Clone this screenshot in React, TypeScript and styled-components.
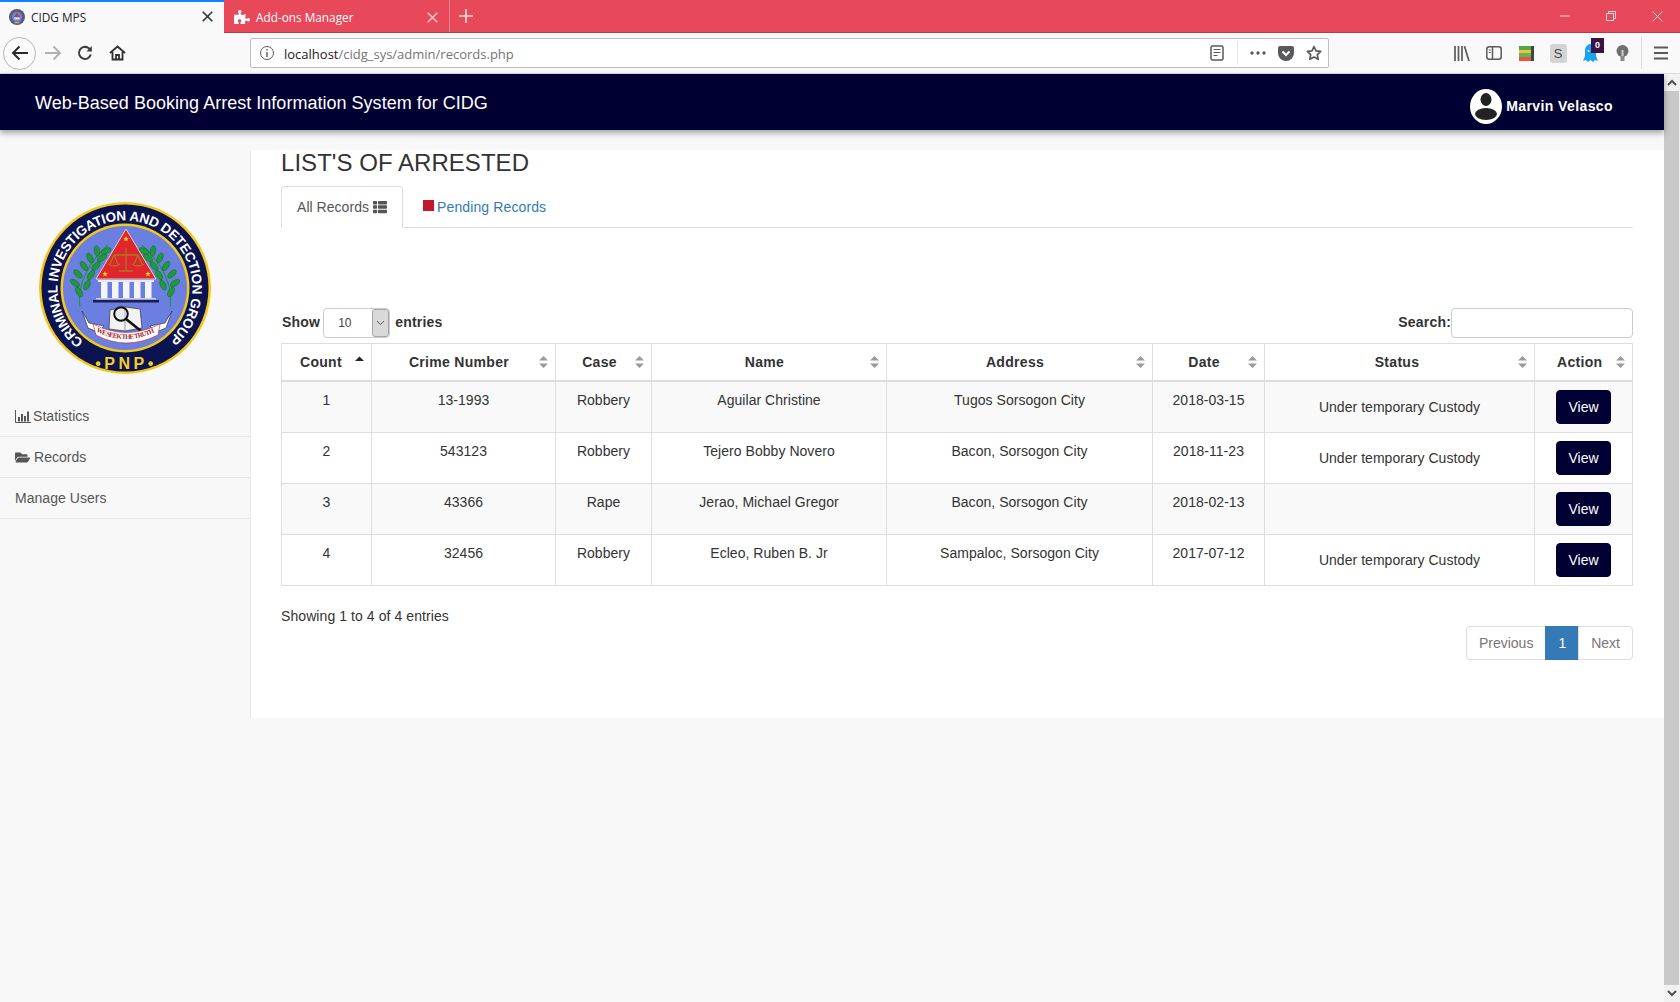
import React from "react";
import styled, { createGlobalStyle } from "styled-components";
import { FaFolderOpen, FaPuzzlePiece, FaThList } from "react-icons/fa";

const Global = createGlobalStyle`
  html, body { margin: 0; padding: 0; background: #f8f8f8; overflow: hidden; }
  * { box-sizing: border-box; }
  body { font-family: "Liberation Sans", Arial, sans-serif; font-size: 14px; line-height: 20px; color: #333; letter-spacing: .04px; }
`;

const Window = styled.div`
  width: 1680px; height: 1002px; display: flex; flex-direction: column; overflow: hidden;
`;

/* ---------- browser tab strip ---------- */
const TabStrip = styled.div`
  height: 33px; flex: none; display: flex; background: #e8495a; border-bottom: 1px solid #a9414e;
  font-family: "Open Sans", "Noto Sans", sans-serif; font-size: 11.8px; line-height: 32px; letter-spacing: 0;
`;
const Tab = styled.div<{ $active?: boolean }>`
  height: ${(p) => (p.$active ? "33px" : "32px")};
  width: ${(p) => (p.$active ? "224px" : "226px")};
  display: flex; align-items: center;
  padding: ${(p) => (p.$active ? "0 10px 2px 9px" : "2px 10px 0 10px")};
  background: ${(p) => (p.$active ? "#f9f9fa" : "transparent")};
  color: ${(p) => (p.$active ? "#222" : "#fff")};
  border-top: ${(p) => (p.$active ? "2px solid #0a84ff" : "none")};
  border-right: ${(p) => (p.$active ? "none" : "1px solid #f08692")};
`;
const TabLabel = styled.span<{ $gap: number }>`
  margin-left: ${(p) => p.$gap}px;
`;
const TabClose = styled.span`
  margin-left: auto; width: 14px; height: 14px; display: flex; align-items: center; justify-content: center;
`;
const NewTab = styled.div`
  width: 32px; display: flex; align-items: center; justify-content: center;
`;
const WindowControls = styled.div`
  margin-left: auto; display: flex;
`;
const WindowButton = styled.div`
  width: 46px; height: 32px; display: flex; align-items: center; justify-content: center;
`;

/* ---------- browser toolbar ---------- */
const Toolbar = styled.div`
  height: 41px; flex: none; display: flex; align-items: center; padding-left: 3px;
  background: #f9f9fa; border-bottom: 1px solid #dcdcde;
`;
const ToolButton = styled.div`
  position: relative; width: 32px; height: 32px; flex: none; display: flex; align-items: center; justify-content: center;
`;
const BackButton = styled(ToolButton)`
  width: 33px; height: 33px; margin-right: 1px; border-radius: 50%; border: 1px solid #b5b5b7; background: #fbfbfc;
`;
const AddressBar = styled.div`
  width: 1079px; height: 30px; margin-left: 117px; padding-left: 8px; display: flex; align-items: center;
  background: #fff; border: 1px solid #bebebe; border-radius: 2px; flex: none;
  font-family: "Open Sans", "Noto Sans", sans-serif; font-size: 13px; letter-spacing: 0;
`;
const UrlHost = styled.span`
  margin-left: 9px; padding-top: 2px; color: #1a1a1a;
`;
const UrlPath = styled.span`
  color: #747476;
`;
const AddressActions = styled.div`
  margin-left: auto; display: flex; align-items: center;
`;
const AddressIcon = styled.div`
  width: 28px; height: 28px; display: flex; align-items: center; justify-content: center;
`;
const AddressDivider = styled.div`
  width: 1px; height: 24px; margin: 0 6px; background: #e4e4e6;
`;
const ToolbarRight = styled.div`
  margin-left: 117px; display: flex; align-items: center;
`;
const ToolbarDivider = styled.div`
  width: 1px; height: 32px; margin: 0 3px; background: #dadadc;
`;
const GhostBadge = styled.span`
  position: absolute; top: 1px; left: 17px; width: 13px; height: 15px; background: #3a1245; color: #fff;
  font: bold 9px/14px "Liberation Sans", sans-serif; text-align: center;
`;
const SquareS = styled.span`
  width: 17px; height: 19px; border-radius: 3px; background: #d4d4d4; color: #444; text-align: center;
  font: 13px/19px "Liberation Sans", sans-serif;
`;

/* ---------- viewport ---------- */
const Viewport = styled.div`
  flex: 1; min-height: 0; display: flex;
`;
const Page = styled.div`
  width: 1664px; flex: none; display: flex; flex-direction: column; background: #f8f8f8;
`;
const Scrollbar = styled.div`
  width: 16px; flex: none; display: flex; flex-direction: column; background: #f1f1f1;
`;
const ScrollArrow = styled.div`
  height: 17px; flex: none; display: flex; align-items: center; justify-content: center;
`;
const ScrollThumb = styled.div`
  flex: 1; margin-right: 1px; background: #c8c8c8;
`;

/* ---------- site ---------- */
const Header = styled.header`
  position: relative; z-index: 2; height: 56px; flex: none; display: flex; align-items: center; justify-content: space-between;
  padding: 0 51px 0 35px; background: #000033; color: #fff; box-shadow: 0 3px 6px rgba(0, 0, 0, 0.35);
`;
const Brand = styled.div`
  padding-top: 2px; font-size: 18px; letter-spacing: .02px;
`;
const UserBlock = styled.div`
  margin-top: 8px; display: flex; align-items: center; gap: 4px; font-weight: bold; letter-spacing: .4px;
`;
const Body = styled.div`
  display: grid; grid-template-columns: 250px 1fr; align-items: start;
`;
const Sidebar = styled.aside`
  padding-top: 65px; color: #555;
`;
const LogoBox = styled.div`
  margin: 0 0 11px 30px; width: 190px; height: 190px;
`;
const NavRow = styled.div<{ $gap: number }>`
  height: 41px; display: flex; align-items: center; gap: ${(p) => p.$gap}px; padding-left: 15px; border-bottom: 1px solid #e7e7e7;
`;
const Main = styled.main`
  margin-top: 20px; height: 568px; padding: 0 31px 0 30px; background: #fff; border-left: 1px solid #e7e7e7;
`;
const Title = styled.h1`
  margin: 0; font-size: 24px; line-height: 26px; font-weight: 400; color: #333;
`;
const TabNav = styled.nav`
  margin-top: 10px; height: 42px; display: flex; border-bottom: 1px solid #ddd;
`;
const PageTab = styled.div<{ $active?: boolean }>`
  height: 42px; padding: 10px 15px; margin-right: 2px; display: flex; align-items: center;
  border: 1px solid ${(p) => (p.$active ? "#ddd" : "transparent")};
  border-bottom-color: ${(p) => (p.$active ? "#fff" : "transparent")};
  border-radius: 4px 4px 0 0; background: ${(p) => (p.$active ? "#fff" : "transparent")};
  color: ${(p) => (p.$active ? "#555" : "#337ab7")};
  letter-spacing: ${(p) => (p.$active ? ".04px" : ".12px")};
`;
const TabIconGap = styled.span`
  display: flex; margin-left: 4px; font-size: 14px;
`;
const RedSquare = styled.span`
  width: 11px; height: 11px; margin: -4px 3px 0 2px; background: #c0192d; flex: none;
`;
const Controls = styled.div`
  margin-top: 80px; height: 30px; display: flex; align-items: center; justify-content: space-between;
  font-weight: bold; letter-spacing: .2px;
`;
const LengthGroup = styled.div`
  display: flex; align-items: center; gap: 4px; padding-left: 1px;
`;
const ControlText = styled.span`
  margin-top: -2px;
`;
const SelectBox = styled.div`
  width: 67px; height: 30px; margin: 0 1px 0 -1px; display: flex; align-items: stretch; justify-content: space-between; padding-left: 14px;
  border: 1px solid #ccc; border-radius: 4px; font-size: 12px; font-weight: 400; line-height: 28px; color: #444; overflow: hidden; letter-spacing: 0;
`;
const SelectArrow = styled.span`
  width: 17px; display: flex; align-items: center; justify-content: center; background: #d9d9d9;
  border: 1px solid #a6a6a6; border-radius: 3px;
`;
const SearchInput = styled.div`
  width: 182px; height: 30px; background: #fff; border: 1px solid #ccc; border-radius: 4px;
`;
const SearchGroup = styled.div`
  display: flex; align-items: center;
`;
const Table = styled.table`
  width: 1351px; margin-top: 5px; table-layout: fixed; border-collapse: collapse; border: 1px solid #ddd;
`;
const Th = styled.th<{ $left: number }>`
  position: relative; height: 37px; padding: 8px 30px 8px ${(p) => p.$left}px; text-align: center; font-weight: bold; letter-spacing: .3px;
  border: 1px solid #ddd; border-bottom-width: 2px;
`;
const SortMark = styled.svg`
  position: absolute; right: 6px; top: 11px;
`;
const Tr = styled.tr<{ $striped: boolean }>`
  background: ${(p) => (p.$striped ? "#f9f9f9" : "#fff")};
`;
const Td = styled.td<{ $middle?: boolean }>`
  height: 51px; padding: 8px; text-align: center; border: 1px solid #ddd;
  vertical-align: ${(p) => (p.$middle ? "middle" : "top")};
`;
const ViewButton = styled.button`
  height: 34px; padding: 6px 11.5px; border: 1px solid #000033; border-radius: 4px; background: #000033; color: #fff;
  font: 14px/20px "Liberation Sans", Arial, sans-serif;
`;
const Info = styled.div`
  margin-top: 20px; height: 20px; letter-spacing: .08px;
`;
const Pagination = styled.div`
  display: flex; justify-content: flex-end; letter-spacing: 0;
`;
const PageLink = styled.div<{ $active?: boolean; $pos?: "first" | "last" }>`
  padding: 6px 12px; height: 34px; margin-left: -1px; color: ${(p) => (p.$active ? "#fff" : "#777")};
  background: ${(p) => (p.$active ? "#337ab7" : "#fff")};
  border: 1px solid ${(p) => (p.$active ? "#337ab7" : "#ddd")};
  border-radius: ${(p) => (p.$pos === "first" ? "4px 0 0 4px" : p.$pos === "last" ? "0 4px 4px 0" : "0")};
`;

/* ---------- drawings ---------- */
const Leaves = () => {
  const leaves = [
    [49, 97, -30], [45, 88, -55], [57, 90, 25], [48, 79, -45], [61, 80, 35],
    [54, 71, -35], [66, 71, 45], [60, 63, -25], [72, 63, 55], [67, 56, -10], [76, 56, 65],
  ];
  return (
    <>
      <path d="M50 112 C47 92 56 70 78 50" fill="none" stroke="#1f9a3a" strokeWidth="1.2" />
      {leaves.map(([x, y, r], i) => (
        <ellipse key={i} cx={x} cy={y} rx="2.7" ry="5.4" fill="#1f9a3a" stroke="#0c5c20" strokeWidth=".4" transform={`rotate(${r} ${x} ${y})`} />
      ))}
    </>
  );
};

const Star = ({ x, y, s = 3 }: { x: number; y: number; s?: number }) => {
  const pts = Array.from({ length: 10 }, (_, i) => {
    const a = (Math.PI / 5) * i - Math.PI / 2;
    const r = i % 2 ? s * 0.42 : s;
    return `${x + r * Math.cos(a)},${y + r * Math.sin(a)}`;
  }).join(" ");
  return <polygon points={pts} fill="#ffd21f" />;
};

const Logo = () => (
  <svg width="190" height="190" viewBox="0 0 190 190">
    <defs>
      <path id="ringText" d="M53.500 146.200 A67.500 67.500 0 1 1 138.500 144.600" />
      <path id="mottoText" d="M65 136 Q96 152 127 136" />
    </defs>
    <circle cx="95" cy="93" r="86" fill="#f2c81e" />
    <circle cx="95" cy="93" r="83.500" fill="#0b1350" />
    <circle cx="95" cy="93" r="64.500" fill="#f2c81e" />
    <circle cx="95" cy="93" r="62" fill="#6a7fe0" />
    <text fontFamily="Liberation Sans, sans-serif" fontWeight="bold" fontSize="13.6" fill="#fff">
      <textPath href="#ringText" textLength="331" lengthAdjust="spacing">CRIMINAL INVESTIGATION AND DETECTION GROUP</textPath>
    </text>
    <text x="96" y="174" textAnchor="middle" fontFamily="Liberation Sans, sans-serif" fontWeight="bold" fontSize="16" letterSpacing="3.5" fill="#f5d020">•PNP•</text>
    <Leaves />
    <g transform="matrix(-1 0 0 1 190 0)"><Leaves /></g>
    <polygon points="96,34 66,84 126,84" fill="#e0252c" stroke="#f4f0d8" strokeWidth=".8" />
    <Star x={96} y={44} />
    <Star x={75} y={79} />
    <Star x={118} y={79} />
    <g stroke="#a87820" fill="none" strokeWidth="1.300">
      <path d="M96 53V76M84 60H108M84 60l-4 9M84 60l4 9M108 60l-4 9M108 60l4 9M89 76H103" />
      <path d="M78 69q6 4 12 0M102 69q6 4 12 0" />
    </g>
    <rect x="68" y="85" width="56" height="2" fill="#e6e9f7" />
    {[71, 82, 93, 104, 115].map((x) => (
      <rect key={x} x={x} y="87" width="6.500" height="16" fill="#f4f5fb" />
    ))}
    <rect x="66" y="103" width="60" height="1.500" fill="#c9cee8" />
    <rect x="63" y="105" width="66" height="2.500" fill="#1a1f4e" />
    <path d="M80 115 L95 112 L110 114 L112 133 L95 136 L79 134Z" fill="#f2f2f2" stroke="#333" strokeWidth=".7" />
    <path d="M95 112V136" stroke="#777" strokeWidth=".7" />
    <circle cx="91" cy="119" r="6.800" fill="#dfe3ef" fillOpacity=".5" stroke="#111" strokeWidth="2" />
    <path d="M96 124L111 136" stroke="#111" strokeWidth="2.600" />
    <path d="M52 116 L59 128 L74 131 L68 137 L58 133 Z" fill="#fff" stroke="#222" strokeWidth=".6" />
    <path d="M142 116 L135 128 L120 131 L126 137 L136 133 Z" fill="#fff" stroke="#222" strokeWidth=".6" />
    <path d="M63 129 Q96 146 130 129 L128 140 Q96 156 66 140Z" fill="#fff" stroke="#c02030" strokeWidth=".6" />
    <text fontFamily="Liberation Serif, serif" fontWeight="bold" fontSize="6.800" fill="#a81c2c">
      <textPath href="#mottoText" textLength="61" lengthAdjust="spacing" startOffset="1">WE SEEK THE TRUTH</textPath>
    </text>
  </svg>
);

const Favicon = () => (
  <svg width="16" height="16" viewBox="0 0 16 16">
    <circle cx="8" cy="8" r="8" fill="#59597a" />
    <circle cx="8" cy="8" r="5.200" fill="#6f86d8" />
    <polygon points="8,3.500 5,8 11,8" fill="#b8413f" />
    <rect x="5.500" y="8.400" width="5" height="2" fill="#e6e6ee" />
    <rect x="5.500" y="13" width="5" height="1.400" fill="#c9a93a" />
  </svg>
);

const grey = "#5a5a5d";

const CloseMark = ({ color, size = 11, w = 1.6 }: { color: string; size?: number; w?: number }) => (
  <svg width={size} height={size} viewBox="0 0 11 11"><path d="M.7.7l9.600 9.600M10.300.7L.7 10.300" stroke={color} strokeWidth={w} fill="none" /></svg>
);

const ChartIcon = () => (
  <svg width="16" height="13" viewBox="0 0 16 13">
    <path d="M.5 0v12.500H16" fill="none" stroke="#555" />
    <path d="M3 7h2v4.500H3zM6 4h2v7.500H6zM9 6h2v5.500H9zM12 1.500h2v10h-2z" fill="#555" />
  </svg>
);

const SortIcon = ({ asc }: { asc?: boolean }) => (
  <SortMark width="11" height="14" viewBox="0 0 11 14">
    {asc ? (
      <path d="M5.500 1.500L10 6H1z" fill="#222" />
    ) : (
      <path d="M5.500 1L10 5.500H1zM5.500 13L1 8.500H10z" fill="#9a9a9a" />
    )}
  </SortMark>
);

const columns = [
  { label: "Count", width: 90, left: 18, asc: true },
  { label: "Crime Number", width: 184, left: 21 },
  { label: "Case", width: 96, left: 22 },
  { label: "Name", width: 235, left: 21 },
  { label: "Address", width: 266, left: 21 },
  { label: "Date", width: 112, left: 21 },
  { label: "Status", width: 270, left: 25 },
  { label: "Action", width: 98, left: 22 },
];

const rows = [
  ["1", "13-1993", "Robbery", "Aguilar Christine", "Tugos Sorsogon City", "2018-03-15", "Under temporary Custody"],
  ["2", "543123", "Robbery", "Tejero Bobby Novero", "Bacon, Sorsogon City", "2018-11-23", "Under temporary Custody"],
  ["3", "43366", "Rape", "Jerao, Michael Gregor", "Bacon, Sorsogon City", "2018-02-13", ""],
  ["4", "32456", "Robbery", "Ecleo, Ruben B. Jr", "Sampaloc, Sorsogon City", "2017-07-12", "Under temporary Custody"],
];

export default function App() {
  return (
    <Window>
      <Global />
      <TabStrip>
        <Tab $active>
          <Favicon />
          <TabLabel $gap={6}>CIDG MPS</TabLabel>
          <TabClose><CloseMark color="#333" /></TabClose>
        </Tab>
        <Tab>
          <FaPuzzlePiece size={16} color="#fff" />
          <TabLabel $gap={6}>Add-ons Manager</TabLabel>
          <TabClose><CloseMark color="#f7c3c9" /></TabClose>
        </Tab>
        <NewTab>
          <svg width="14" height="14" viewBox="0 0 14 14"><path d="M7 0v14M0 7h14" stroke="#fbdde0" strokeWidth="1.6" /></svg>
        </NewTab>
        <WindowControls>
          <WindowButton><svg width="10" height="2" viewBox="0 0 10 2"><path d="M0 1h10" stroke="#fbdde0" /></svg></WindowButton>
          <WindowButton>
            <svg width="10" height="10" viewBox="0 0 10 10" fill="none" stroke="#fbdde0"><path d="M.5 2.500h7v7h-7zM2.500 2.500v-2h7v7h-2" /></svg>
          </WindowButton>
          <WindowButton><CloseMark color="#fbdde0" w={1} /></WindowButton>
        </WindowControls>
      </TabStrip>

      <Toolbar>
        <BackButton>
          <svg width="18" height="16" viewBox="0 0 18 16" fill="none" stroke="#2b2b2e" strokeWidth="2"><path d="M17 8H2M8.500 1.500L2 8l6.500 6.500" /></svg>
        </BackButton>
        <ToolButton>
          <svg width="18" height="16" viewBox="0 0 18 16" fill="none" stroke="#b1b1b3" strokeWidth="2"><path d="M1 8h15M9.500 1.500L16 8l-6.500 6.500" /></svg>
        </ToolButton>
        <ToolButton>
          <svg width="16" height="16" viewBox="0 0 16 16" fill="none" stroke="#3c3c3f" strokeWidth="2"><path d="M13.800 9.500A6 6 0 1 1 11.500 3L14 5.500" /><path d="M14.800 1v5.500H9.500" fill="#3c3c3f" stroke="none" /></svg>
        </ToolButton>
        <ToolButton>
          <svg width="17" height="16" viewBox="0 0 17 16" fill="none" stroke="#2f2f32" strokeWidth="1.8"><path d="M1 8l7.500-6.500L16 8M3.500 7v7.500h10V7" /><path d="M7 14.500V10h3v4.500" /></svg>
        </ToolButton>

        <AddressBar>
          <svg width="16" height="16" viewBox="0 0 16 16" fill="none" stroke="#5a5a5d"><circle cx="8" cy="8" r="6.500" /><path d="M8 7v5M8 4v1.500" strokeWidth="1.400" /></svg>
          <UrlHost>localhost<UrlPath>/cidg_sys/admin/records.php</UrlPath></UrlHost>
          <AddressActions>
            <AddressIcon>
              <svg width="14" height="16" viewBox="0 0 14 16" fill="none" stroke={grey} strokeWidth="1.500"><rect x="1" y="1" width="12" height="14" rx="1.500" /><path d="M3.500 4.500h7M3.500 7.500h7M3.500 10.500h4" strokeWidth="1.200" /></svg>
            </AddressIcon>
            <AddressDivider />
            <AddressIcon>
              <svg width="16" height="4" viewBox="0 0 16 4" fill={grey}><circle cx="2" cy="2" r="1.700" /><circle cx="8" cy="2" r="1.700" /><circle cx="14" cy="2" r="1.700" /></svg>
            </AddressIcon>
            <AddressIcon>
              <svg width="16" height="15" viewBox="0 0 16 15"><path d="M2 0h12a2 2 0 0 1 2 2v5A8 8 0 0 1 0 7V2a2 2 0 0 1 2-2z" fill={grey} /><path d="M4.500 5.500L8 9l3.500-3.500" fill="none" stroke="#fff" strokeWidth="2" /></svg>
            </AddressIcon>
            <AddressIcon>
              <svg width="16" height="16" viewBox="0 0 16 16"><path d="M8 1.500l2 4.300 4.700.6-3.400 3.200.9 4.700L8 12l-4.200 2.300.9-4.700L1.300 6.400 6 5.800z" fill="none" stroke={grey} strokeWidth="1.700" strokeLinejoin="round" /></svg>
            </AddressIcon>
          </AddressActions>
        </AddressBar>

        <ToolbarRight>
          <ToolButton>
            <svg width="16" height="15" viewBox="0 0 16 15" fill="none" stroke={grey} strokeWidth="1.700"><path d="M1 0v15M4.500 0v15M8 0v15M10.500.3L15 15" /></svg>
          </ToolButton>
          <ToolButton>
            <svg width="16" height="14" viewBox="0 0 16 14" fill="none" stroke={grey} strokeWidth="1.500"><rect x=".8" y=".8" width="14.400" height="12.400" rx="2.500" /><path d="M6.500 1v12" /><path d="M2.800 4h2M2.800 6.500h2" strokeWidth="1" /></svg>
          </ToolButton>
          <ToolButton>
            <svg width="15" height="15" viewBox="0 0 15 15">
              <rect x="0" y="0" width="12" height="4" fill="#4da84f" />
              <rect x="0" y="4" width="12" height="3" fill="#f2c230" />
              <rect x="0" y="7" width="12" height="4" fill="#5cb85c" />
              <rect x="0" y="11" width="12" height="4" fill="#e8553f" />
              <rect x="12" y="0" width="3" height="15" fill="#444" />
            </svg>
          </ToolButton>
          <ToolButton><SquareS>S</SquareS></ToolButton>
          <ToolButton>
            <svg width="15" height="18" viewBox="0 0 15 18"><path d="M7.500 0A6 6 0 0 1 13 6v6l2 5-3-1-2 2-2.500-2L5 18l-2-2-3 1 2-5V6a6 6 0 0 1 5.500-6z" fill="#19a4f2" /><circle cx="5.500" cy="7" r="1" fill="#fff" /><circle cx="9.500" cy="7" r="1" fill="#fff" /></svg>
            <GhostBadge>0</GhostBadge>
          </ToolButton>
          <ToolButton>
            <svg width="13" height="16" viewBox="0 0 13 16"><circle cx="6.500" cy="6" r="6" fill="#707072" /><rect x="4.500" y="11" width="4" height="5" fill="#8a8a8c" /><rect x="5.500" y="5" width="2" height="6" fill="#cfcfcf" /></svg>
          </ToolButton>
          <ToolbarDivider />
          <ToolButton>
            <svg width="14" height="14" viewBox="0 0 14 14" fill={grey}><rect width="14" height="2" y="0.500" /><rect width="14" height="2" y="6" /><rect width="14" height="2" y="11.500" /></svg>
          </ToolButton>
        </ToolbarRight>
      </Toolbar>

      <Viewport>
        <Page>
          <Header>
            <Brand>Web-Based Booking Arrest Information System for CIDG</Brand>
            <UserBlock>
              <svg width="32" height="35" viewBox="0 0 32 35">
                <ellipse cx="16" cy="17.500" rx="16" ry="17.500" fill="#fff" />
                <ellipse cx="16" cy="10.500" rx="5.500" ry="6.500" fill="#222" />
                <ellipse cx="16" cy="25" rx="11" ry="6" fill="#222" />
              </svg>
              Marvin Velasco
            </UserBlock>
          </Header>
          <Body>
            <Sidebar>
              <LogoBox><Logo /></LogoBox>
              <NavRow $gap={2}><ChartIcon />Statistics</NavRow>
              <NavRow $gap={4}><FaFolderOpen size={15} />Records</NavRow>
              <NavRow $gap={0}>Manage Users</NavRow>
            </Sidebar>
            <Main>
              <Title>LIST'S OF ARRESTED</Title>
              <TabNav>
                <PageTab $active>All Records<TabIconGap><FaThList size={14} /></TabIconGap></PageTab>
                <PageTab><RedSquare />Pending Records</PageTab>
              </TabNav>
              <Controls>
                <LengthGroup>
                  <ControlText>Show</ControlText>
                  <SelectBox>
                    10
                    <SelectArrow>
                      <svg width="9" height="6" viewBox="0 0 9 6" fill="none" stroke="#555"><path d="M1 1l3.500 3.500L8 1" /></svg>
                    </SelectArrow>
                  </SelectBox>
                  <ControlText>entries</ControlText>
                </LengthGroup>
                <SearchGroup><ControlText>Search:</ControlText><SearchInput /></SearchGroup>
              </Controls>
              <Table>
                <colgroup>
                  {columns.map((c) => <col key={c.label} width={c.width} />)}
                </colgroup>
                <thead>
                  <tr>
                    {columns.map((c) => (
                      <Th key={c.label} $left={c.left}>{c.label}<SortIcon asc={c.asc} /></Th>
                    ))}
                  </tr>
                </thead>
                <tbody>
                  {rows.map((r, i) => (
                    <Tr key={r[0]} $striped={i % 2 === 0}>
                      {r.slice(0, 6).map((v, j) => <Td key={j}>{v}</Td>)}
                      <Td $middle>{r[6]}</Td>
                      <Td $middle><ViewButton>View</ViewButton></Td>
                    </Tr>
                  ))}
                </tbody>
              </Table>
              <Info>Showing 1 to 4 of 4 entries</Info>
              <Pagination>
                <PageLink $pos="first">Previous</PageLink>
                <PageLink $active>1</PageLink>
                <PageLink $pos="last">Next</PageLink>
              </Pagination>
            </Main>
          </Body>
        </Page>
        <Scrollbar>
          <ScrollArrow>
            <svg width="10" height="7" viewBox="0 0 10 7" fill="none" stroke="#505050" strokeWidth="2"><path d="M1 6l4-4 4 4" /></svg>
          </ScrollArrow>
          <ScrollThumb />
          <ScrollArrow>
            <svg width="10" height="7" viewBox="0 0 10 7" fill="none" stroke="#505050" strokeWidth="2"><path d="M1 1l4 4 4-4" /></svg>
          </ScrollArrow>
        </Scrollbar>
      </Viewport>
    </Window>
  );
}
